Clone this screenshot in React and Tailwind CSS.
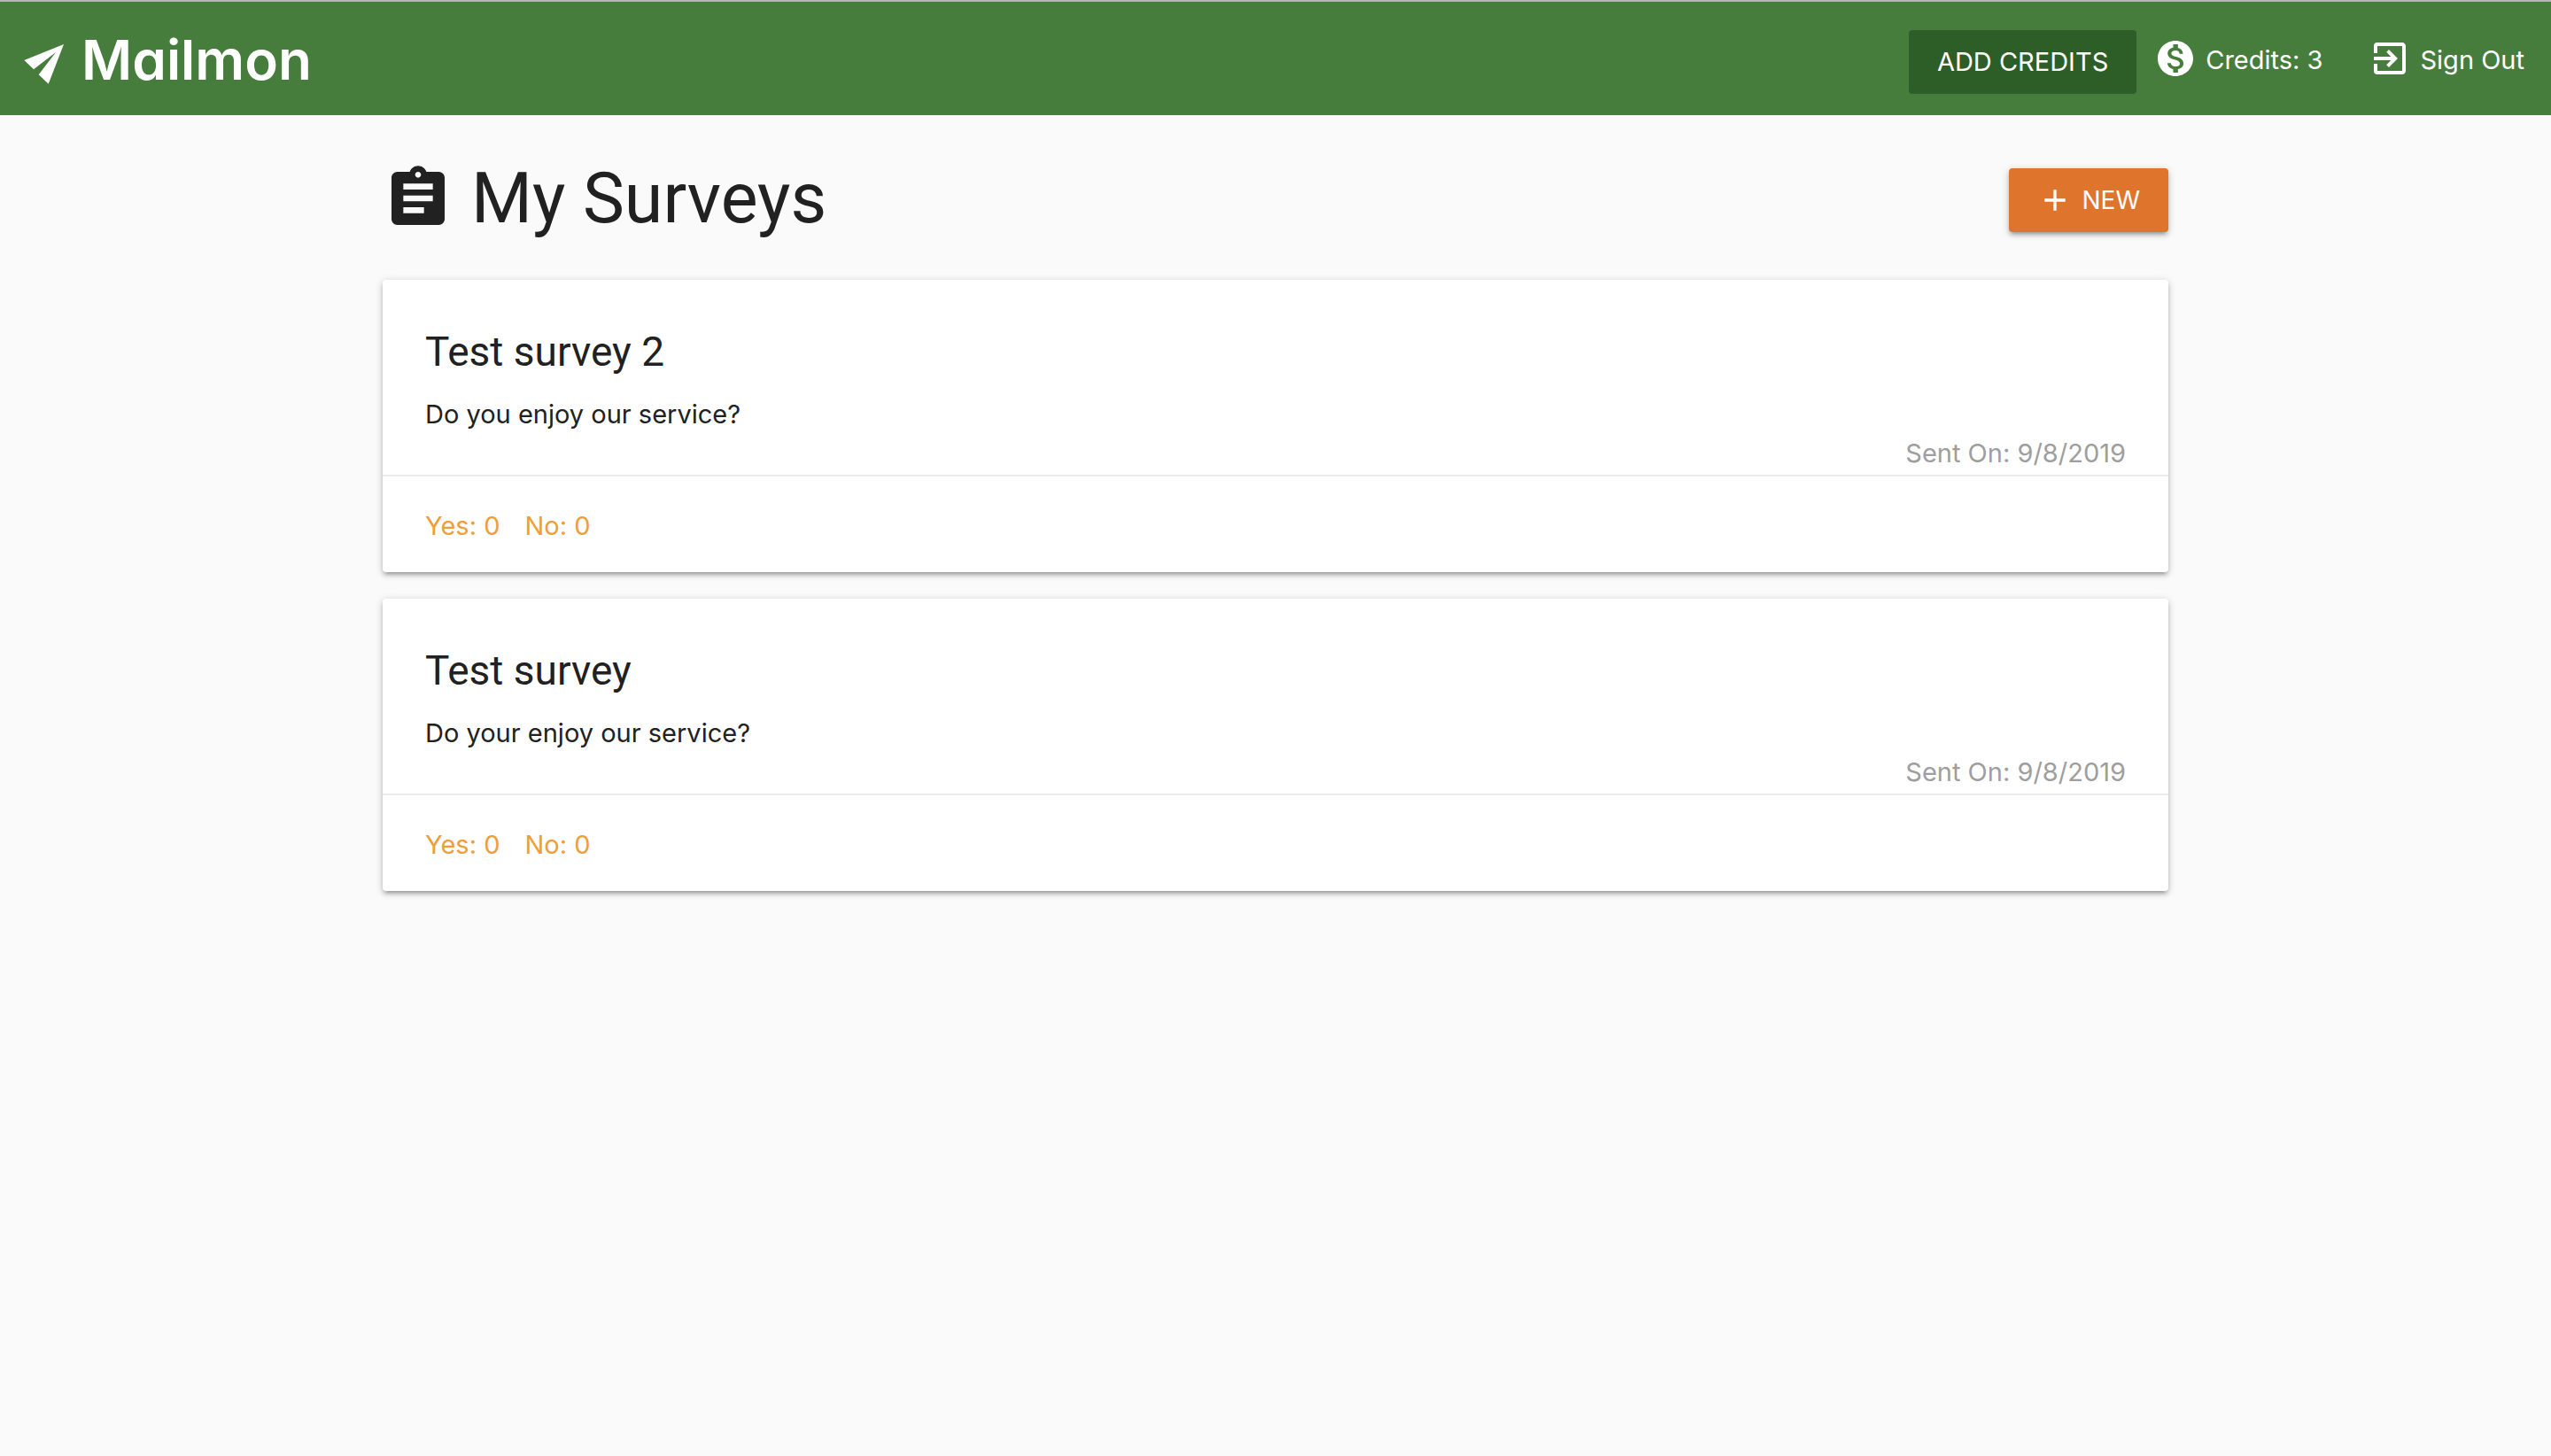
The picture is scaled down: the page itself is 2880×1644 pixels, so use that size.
import { MdAdd, MdAssignment, MdExitToApp, MdMonetizationOn } from "react-icons/md";

const surveys = [
  { title: "Test survey 2", body: "Do you enjoy our service?", sent: "9/8/2019", yes: 0, no: 0 },
  { title: "Test survey", body: "Do your enjoy our service?", sent: "9/8/2019", yes: 0, no: 0 },
];

const PaperPlane = () => (
  <svg width="48" height="64" viewBox="0 0 48 64" fill="currentColor" aria-hidden="true">
    <path d="M1.3 32 46 14 28.7 58.7 17.7 48.3 37 23 12 42.3Z" />
  </svg>
);

function Header() {
  return (
    <header className="border-t-2 border-[#b4b8b3] bg-[#467d3c] text-white">
      <nav className="flex h-32 items-center justify-between pl-[26px] pr-[30px]">
        <a href="#home" className="flex items-center gap-[18px] pt-1">
          <PaperPlane />
          <span className="text-[62px] leading-none font-semibold [font-feature-settings:'cv11']">Mailmon</span>
        </a>
        <div className="flex items-center text-[29px] leading-[44px]">
          <button className="mt-2 mr-5 h-[72px] rounded bg-[#2e5e27] px-8">ADD CREDITS</button>
          <span className="mr-[52px] flex items-center gap-[10px]">
            <MdMonetizationOn size={48} />
            <span className="pt-1">Credits: 3</span>
          </span>
          <a href="#signout" className="flex items-center gap-[10px]">
            <MdExitToApp size={48} />
            <span className="pt-1">Sign Out</span>
          </a>
        </div>
      </nav>
    </header>
  );
}

function SurveyCard({ survey }) {
  return (
    <article className="rounded bg-white shadow-[0_4px_4px_0_rgba(0,0,0,0.14),0_6px_2px_-4px_rgba(0,0,0,0.12),0_2px_10px_0_rgba(0,0,0,0.2)]">
      <div className="px-12 pt-12 pb-[2px] text-[29px] leading-[44px]">
        <h2 className="mb-4 font-['Roboto',sans-serif] text-[46px] leading-[66px]">{survey.title}</h2>
        <p>{survey.body}</p>
        <p className="text-right text-[#9e9e9e]">Sent On: {survey.sent}</p>
      </div>
      <div className="flex gap-7 border-t-2 border-[#ebebeb] px-12 pt-[34px] pb-[30px] text-[29px] leading-[44px] text-[#f19d38]">
        <span>Yes: {survey.yes}</span>
        <span>No: {survey.no}</span>
      </div>
    </article>
  );
}

export default function App() {
  return (
    <div className="min-h-screen bg-[#fafafa] font-['Inter',sans-serif] text-[#212121]">
      <Header />
      <main className="mx-auto w-[70%] pt-[54px]">
        <div className="mb-12 flex h-[84px] items-center justify-between">
          <h1 className="flex items-center gap-5 self-start font-['Roboto',sans-serif] text-[79px] leading-none">
            <MdAssignment size={80} />
            My Surveys
          </h1>
          <button className="flex h-[72px] items-center gap-[10px] rounded bg-[#df742d] px-8 text-[28px] text-white shadow-[0_4px_4px_0_rgba(0,0,0,0.14),0_6px_2px_-4px_rgba(0,0,0,0.12),0_2px_10px_0_rgba(0,0,0,0.2)]">
            <MdAdd size={40} />
            NEW
          </button>
        </div>
        <div className="flex flex-col gap-[30px]">
          {surveys.map((s) => (
            <SurveyCard key={s.title} survey={s} />
          ))}
        </div>
      </main>
    </div>
  );
}
